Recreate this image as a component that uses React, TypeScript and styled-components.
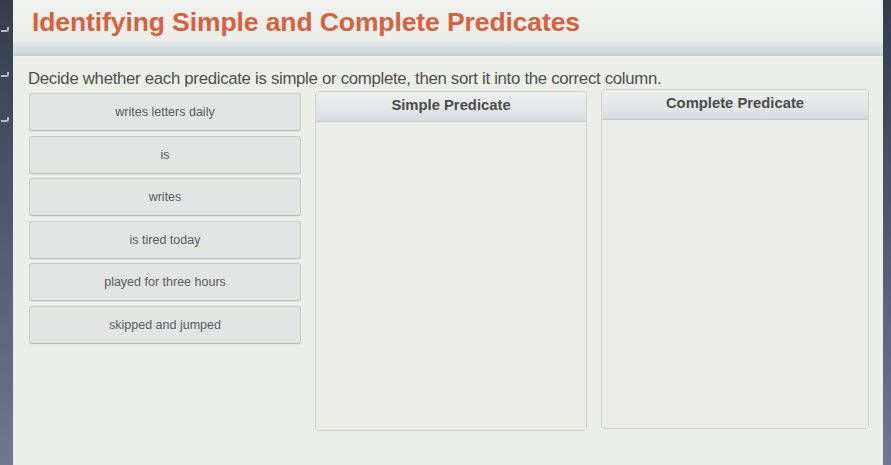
import React from "react";
import styled, { createGlobalStyle } from "styled-components";

const GlobalStyle = createGlobalStyle`
  html, body {
    margin: 0;
    padding: 0;
    background: #eceee8;
  }
  body {
    font-family: "Liberation Sans", Arial, sans-serif;
  }
`;

const Frame = styled.div`
  display: flex;
  width: 891px;
  height: 465px;
  overflow: hidden;
`;

const Rail = styled.div<{ $width: number }>`
  width: ${(p) => p.$width}px;
  flex: none;
  background: linear-gradient(180deg, #343c4c 0%, #4d576d 45%, #6d7893 100%);
  display: flex;
  flex-direction: column;
  align-items: flex-start;
  padding-top: 27px;
  gap: 40px;
  box-sizing: border-box;
`;

const RailMark = styled.span`
  display: block;
  width: 6px;
  height: 3px;
  margin-left: 1px;
  border-bottom: 2px solid #c9d0dc;
  border-right: 2px solid #c9d0dc;
  border-bottom-right-radius: 3px;
  opacity: 0.85;
`;

const Main = styled.main`
  flex: 1;
  display: flex;
  flex-direction: column;
  background: #eceee8;
  min-width: 0;
`;

const Header = styled.header`
  height: 42px;
  display: flex;
  align-items: center;
  padding-left: 19px;
  background: linear-gradient(180deg, #eff1ee 0%, #eceeea 100%);
`;

const Title = styled.h1`
  margin: 0;
  font-size: 26.5px;
  font-weight: 700;
  color: #d8613c;
  letter-spacing: -0.1px;
  padding-top: 2px;
`;

const HeaderBand = styled.div`
  height: 14px;
  background: linear-gradient(180deg, #e2e7e8 0%, #d1dadd 70%, #c7d1d5 100%);
  border-bottom: 1px solid #f3f4f1;
`;

const Content = styled.section`
  padding: 12px 0 0 15px;
  display: flex;
  flex-direction: column;
`;

const Instructions = styled.p`
  margin: 0;
  font-size: 16.8px;
  line-height: 19px;
  color: #4f4f4f;
  letter-spacing: -0.3px;
`;

const Board = styled.div`
  margin-top: 1px;
  display: grid;
  grid-template-columns: 273px 272px 268px;
  column-gap: 14px;
  align-items: start;
`;

const Choices = styled.div`
  display: flex;
  flex-direction: column;
  gap: 4.6px;
  padding-top: 4px;
  padding-left: 1px;
`;

const Choice = styled.div`
  height: 36px;
  display: flex;
  align-items: center;
  justify-content: center;
  background: #e1e5e3;
  border: 1px solid #c6cac8;
  border-bottom-color: #b7bbb9;
  border-radius: 3px;
  font-size: 12.5px;
  color: #5a5c5b;
  box-shadow: 0 1px 0 rgba(0, 0, 0, 0.04);
`;

const Column = styled.div<{ $offset: number }>`
  margin-top: ${(p) => p.$offset}px;
  height: 338px;
  display: flex;
  flex-direction: column;
  background: #ebece6;
  border: 1px solid #cdd0ce;
  border-radius: 4px;
  overflow: hidden;
`;

const ColumnHeader = styled.div`
  height: 30px;
  flex: none;
  display: flex;
  align-items: center;
  justify-content: center;
  background: linear-gradient(180deg, #eef0ef 0%, #e2e6e6 60%, #d6dcdd 100%);
  border-bottom: 1px solid #c4cacb;
  font-size: 14.8px;
  font-weight: 700;
  color: #4a4c4c;
  padding-bottom: 3px;
  box-sizing: border-box;
`;

const DropArea = styled.div`
  flex: 1;
  background: #ecede7;
`;

const choices = [
  "writes letters daily",
  "is",
  "writes",
  "is tired today",
  "played for three hours",
  "skipped and jumped",
];

const columns = [
  { label: "Simple Predicate", offset: 2 },
  { label: "Complete Predicate", offset: 0 },
];

export default function App() {
  return (
    <>
      <GlobalStyle />
      <Frame>
        <Rail $width={13}>
          <RailMark />
          <RailMark />
          <RailMark />
        </Rail>
        <Main>
          <Header>
            <Title>Identifying Simple and Complete Predicates</Title>
          </Header>
          <HeaderBand />
          <Content>
            <Instructions>
              Decide whether each predicate is simple or complete, then sort it into the correct column.
            </Instructions>
            <Board>
              <Choices>
                {choices.map((c) => (
                  <Choice key={c}>{c}</Choice>
                ))}
              </Choices>
              {columns.map((col) => (
                <Column key={col.label} $offset={col.offset}>
                  <ColumnHeader>{col.label}</ColumnHeader>
                  <DropArea />
                </Column>
              ))}
            </Board>
          </Content>
        </Main>
        <Rail $width={8} />
      </Frame>
    </>
  );
}
